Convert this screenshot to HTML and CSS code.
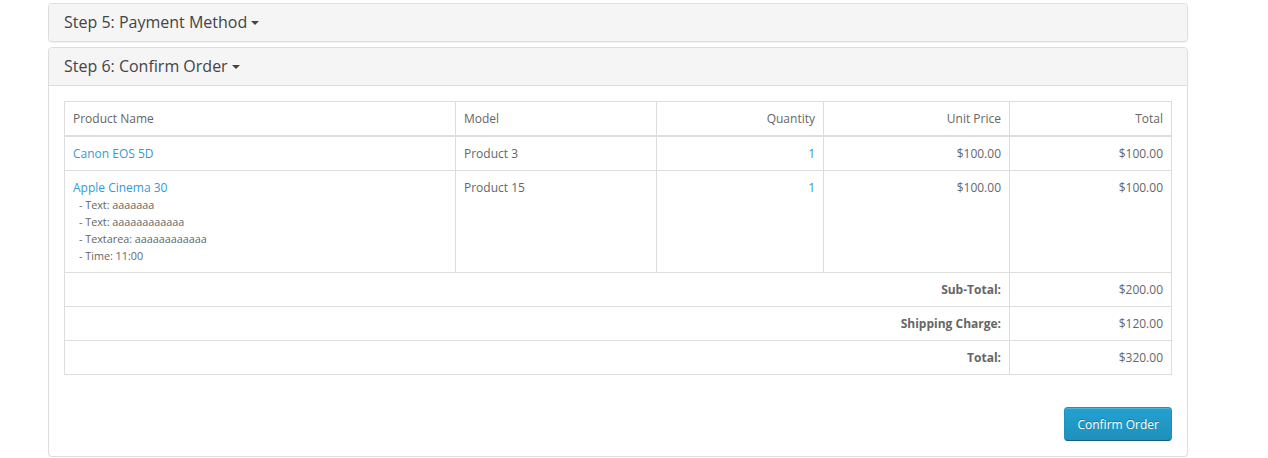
FILE: index.html
```html
<!DOCTYPE html>
<html>
<head>
<meta charset="utf-8">
<link rel="stylesheet" href="styles.css">
</head>
<body>
<div class="panel-group">
  <div class="panel">
    <div class="panel-heading">
      <h4 class="panel-title">Step 5: Payment Method <span class="caret"></span></h4>
    </div>
  </div>
  <div class="panel">
    <div class="panel-heading">
      <h4 class="panel-title">Step 6: Confirm Order <span class="caret"></span></h4>
    </div>
    <div class="panel-body">
      <table class="order-table">
        <colgroup>
          <col class="c-name"><col class="c-model"><col class="c-qty"><col class="c-price"><col class="c-total">
        </colgroup>
        <thead>
          <tr>
            <td class="left">Product Name</td>
            <td class="left">Model</td>
            <td class="right">Quantity</td>
            <td class="right">Unit Price</td>
            <td class="right">Total</td>
          </tr>
        </thead>
        <tbody>
          <tr>
            <td class="left"><a href="#">Canon EOS 5D</a></td>
            <td class="left">Product 3</td>
            <td class="right"><a href="#">1</a></td>
            <td class="right">$100.00</td>
            <td class="right">$100.00</td>
          </tr>
          <tr>
            <td class="left"><a href="#">Apple Cinema 30</a>
              <div class="opt">&nbsp;<small> - Text: aaaaaaa</small></div>
              <div class="opt">&nbsp;<small> - Text: aaaaaaaaaaaa</small></div>
              <div class="opt">&nbsp;<small> - Textarea: aaaaaaaaaaaa</small></div>
              <div class="opt">&nbsp;<small> - Time: 11:00</small></div>
            </td>
            <td class="left">Product 15</td>
            <td class="right"><a href="#">1</a></td>
            <td class="right">$100.00</td>
            <td class="right">$100.00</td>
          </tr>
        </tbody>
        <tfoot>
          <tr>
            <td colspan="4" class="right"><strong>Sub-Total:</strong></td>
            <td class="right">$200.00</td>
          </tr>
          <tr>
            <td colspan="4" class="right"><strong>Shipping Charge:</strong></td>
            <td class="right">$120.00</td>
          </tr>
          <tr>
            <td colspan="4" class="right"><strong>Total:</strong></td>
            <td class="right">$320.00</td>
          </tr>
        </tfoot>
      </table>
      <div class="buttons">
        <button class="btn-primary" type="button">Confirm Order</button>
      </div>
    </div>
  </div>
</div>
</body>
</html>
```

FILE: styles.css
```css
* { box-sizing: border-box; }
html, body { margin: 0; padding: 0; background: #fff; }
body {
  font-family: "Open Sans", "DejaVu Sans", sans-serif;
  font-size: 12px;
  line-height: 1.42857;
  color: #666;
  padding: 3px 0 0 48px;
}
.panel-group { width: 1140px; }
.panel {
  background: #fff;
  border: 1px solid #ddd;
  border-radius: 4px;
  box-shadow: 0 1px 1px rgba(0,0,0,.05);
  overflow: hidden;
}
.panel + .panel { margin-top: 5px; }
.panel-heading {
  background: #f5f5f5;
  padding: 10px 15px;
}
.panel-title {
  margin: 0;
  font-size: 16px;
  line-height: 17px;
  font-weight: normal;
  color: #444;
}
.caret {
  display: inline-block;
  width: 0; height: 0;
  border-left: 4px solid transparent;
  border-right: 4px solid transparent;
  border-top: 4px solid #444;
  vertical-align: middle;
  position: relative;
  top: -1px;
}
.panel-body {
  padding: 15px;
  border-top: 1px solid #ddd;
}
.order-table {
  width: 100%;
  border-collapse: collapse;
  table-layout: fixed;
  border: 1px solid #ddd;
}
.c-name { width: 391px; }
.c-model { width: 201px; }
.c-qty { width: 167px; }
.c-price { width: 186px; }
.c-total { width: 162px; }
.order-table td {
  border: 1px solid #ddd;
  padding: 8px;
  vertical-align: top;
  line-height: 17px;
}
.order-table thead td { border-bottom-width: 2px; }
.left { text-align: left; }
.right { text-align: right; }
a { color: #3499d6; text-decoration: none; }
.opt { font-size: 12px; line-height: 17px; }
.opt small { font-size: 10.8px; line-height: 1; }
strong { font-weight: bold; }
.buttons {
  padding-top: 32px;
  display: flex;
  justify-content: flex-end;
}
.btn-primary {
  font-family: "Open Sans", "DejaVu Sans", sans-serif;
  font-size: 12px;
  line-height: 17px;
  padding: 7.5px 12px;
  color: #fff;
  text-shadow: 0 -1px 0 rgba(0,0,0,.25);
  background-color: #229ac8;
  background-image: linear-gradient(to bottom, #23a1d1, #1f90bb);
  border: 1px solid;
  border-color: #1f90bb #1f90bb #145e7a;
  border-radius: 4px;
  box-shadow: inset 0 1px 0 rgba(255,255,255,.2), 0 1px 2px rgba(0,0,0,.05);
  cursor: pointer;
}
```
